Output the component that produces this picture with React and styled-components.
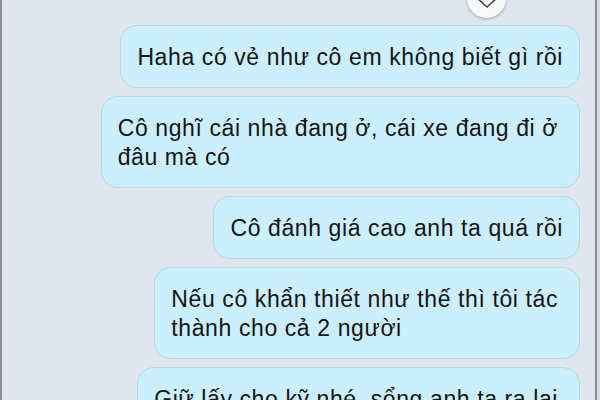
import React from "react";
import styled, { createGlobalStyle } from "styled-components";

const Global = createGlobalStyle`
  html, body { margin: 0; padding: 0; background: #d9dde2; }
  body { width: 600px; height: 400px; overflow: hidden; }
  #root { width: 600px; height: 400px; }
`;

const Screen = styled.div`
  position: relative;
  box-sizing: border-box;
  width: 597px;
  height: 400px;
  overflow: hidden;
  background: #dfe6ee;
  border-left: 2px solid #8c8c8c;
  border-right: 2px solid #8c8c8c;
  font-family: "Liberation Sans", Arial, sans-serif;
`;

const Thread = styled.div`
  display: flex;
  flex-direction: column;
  align-items: flex-end;
  gap: 8px;
  padding: 25px 15px 0 0;
`;

const Bubble = styled.div`
  box-sizing: border-box;
  background: #cbeffc;
  border: 1px solid #b6d6e3;
  border-radius: 17px;
  padding: 17px ${(p) => (p.$wrapped ? 21 : 16)}px 15px 16px;
  color: #151515;
  font-size: 23px;
  letter-spacing: 0.6px;
  line-height: 29px;
  white-space: nowrap;
`;

const Line = styled.div``;

const ScrollButton = styled.div`
  position: absolute;
  left: 465px;
  top: -21px;
  width: 39px;
  height: 39px;
  border-radius: 50%;
  background: #f7f9fb;
  box-shadow: 0 1px 3px rgba(0, 0, 0, 0.3);
  display: flex;
  align-items: flex-end;
  justify-content: center;
  padding-bottom: 9px;
  box-sizing: border-box;
`;

const messages = [
  { lines: ["Haha có vẻ như cô em không biết gì rồi"] },
  { lines: ["Cô nghĩ cái nhà đang ở, cái xe đang đi ở", "đâu mà có"] },
  { lines: ["Cô đánh giá cao anh ta quá rồi"] },
  { lines: ["Nếu cô khẩn thiết như thế thì tôi tác", "thành cho cả 2 người"] },
  { lines: ["Giữ lấy cho kỹ nhé, sổng anh ta ra lại", "thì khó mà tìm"] },
];

export default function App() {
  return (
    <>
      <Global />
      <Screen>
        <ScrollButton>
          <svg width="22" height="12" viewBox="0 0 22 12">
            <polyline points="1,1 11,10 21,1" fill="none" stroke="#3f3f3f" strokeWidth="1.5" strokeLinecap="round" strokeLinejoin="round" />
          </svg>
        </ScrollButton>
        <Thread>
          {messages.map((m, i) => (
            <Bubble key={i} $wrapped={m.lines.length > 1}>
              {m.lines.map((l, j) => (
                <Line key={j}>{l}</Line>
              ))}
            </Bubble>
          ))}
        </Thread>
      </Screen>
    </>
  );
}
